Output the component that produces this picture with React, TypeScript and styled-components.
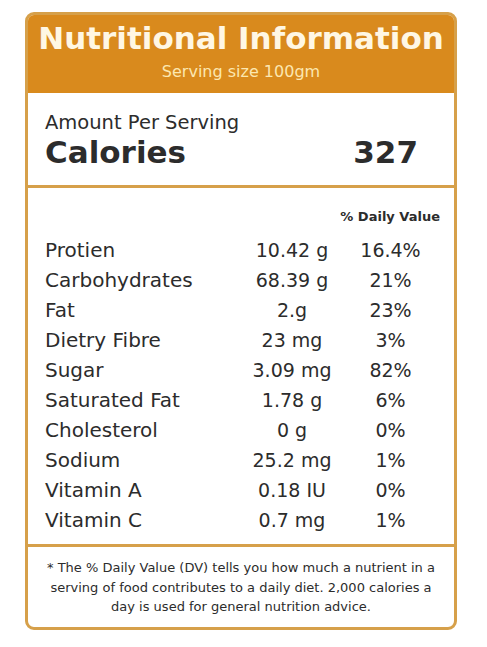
import React from "react";
import styled, { createGlobalStyle } from "styled-components";

const Global = createGlobalStyle`
  html, body { margin: 0; padding: 0; background: #ffffff; }
  body { font-family: "DejaVu Sans", "Noto Sans", sans-serif; color: #2c2c2c; }
`;

const Page = styled.div`
  width: 487px;
  height: 647px;
  padding: 12px 0 0 25px;
  box-sizing: border-box;
`;

const Card = styled.div`
  width: 432px;
  height: 618px;
  box-sizing: border-box;
  border: 3px solid #d6a04a;
  border-radius: 9px;
  overflow: hidden;
  display: flex;
  flex-direction: column;
  background: #fff;
`;

const Header = styled.div`
  background: #d98a1d;
  margin: -3px -3px 0;
  height: 81px;
  flex-shrink: 0;
  display: flex;
  flex-direction: column;
  align-items: center;
  padding-top: 5px;
  box-sizing: border-box;
`;

const Title = styled.div`
  color: #fff7e4;
  font-size: 31px;
  font-weight: 700;
  line-height: 42px;
`;

const Subtitle = styled.div`
  color: #fce7b0;
  font-size: 16px;
  line-height: 20px;
  margin-top: 3px;
`;

const Section = styled.div<{ $h: number }>`
  border-bottom: 3px solid #d6a04a;
  height: ${(p) => p.$h}px;
  flex-shrink: 0;
  box-sizing: border-box;
`;

const Amount = styled.div`
  padding: 19px 0 0 17px;
  font-size: 19.5px;
  line-height: 21px;
`;

const CalRow = styled.div`
  display: flex;
  justify-content: space-between;
  padding: 0 36px 0 17px;
  font-size: 31px;
  font-weight: 700;
  line-height: 38px;
`;

const Table = styled.div`
  padding: 20px 14px 0 17px;
`;

const DvHead = styled.div`
  text-align: right;
  font-size: 13px;
  font-weight: 700;
  line-height: 18px;
  margin-bottom: 9px;
`;

const Row = styled.div`
  display: grid;
  grid-template-columns: 186px 122px 75px;
  align-items: baseline;
  font-size: 20px;
  line-height: 30px;
  height: 30px;
`;

const Cell = styled.div<{ $num?: boolean }>`
  text-align: ${(p) => (p.$num ? "center" : "left")};
  font-size: ${(p) => (p.$num ? "19px" : "20px")};
  white-space: nowrap;
`;

const Note = styled.div`
  padding: 11px 0 0;
  text-align: center;
  font-size: 13px;
  line-height: 19.5px;
  white-space: pre-line;
`;

const rows: [string, string, string][] = [
  ["Protien", "10.42 g", "16.4%"],
  ["Carbohydrates", "68.39 g", "21%"],
  ["Fat", "2.g", "23%"],
  ["Dietry Fibre", "23 mg", "3%"],
  ["Sugar", "3.09 mg", "82%"],
  ["Saturated Fat", "1.78 g", "6%"],
  ["Cholesterol", "0 g", "0%"],
  ["Sodium", "25.2 mg", "1%"],
  ["Vitamin A", "0.18 IU", "0%"],
  ["Vitamin C", "0.7 mg", "1%"],
];

export default function App() {
  return (
    <>
      <Global />
      <Page>
        <Card>
          <Header>
            <Title>Nutritional Information</Title>
            <Subtitle>Serving size 100gm</Subtitle>
          </Header>
          <Section $h={95}>
            <Amount>Amount Per Serving</Amount>
            <CalRow>
              <span>Calories</span>
              <span>327</span>
            </CalRow>
          </Section>
          <Section $h={359}>
            <Table>
              <DvHead>% Daily Value</DvHead>
              {rows.map(([n, v, d]) => (
                <Row key={n}>
                  <Cell>{n}</Cell>
                  <Cell $num>{v}</Cell>
                  <Cell $num>{d}</Cell>
                </Row>
              ))}
            </Table>
          </Section>
          <Note>
            {"* The % Daily Value (DV) tells you how much a nutrient in a\nserving  of food contributes to a daily diet. 2,000 calories a\nday is used for  general nutrition advice."}
          </Note>
        </Card>
      </Page>
    </>
  );
}
